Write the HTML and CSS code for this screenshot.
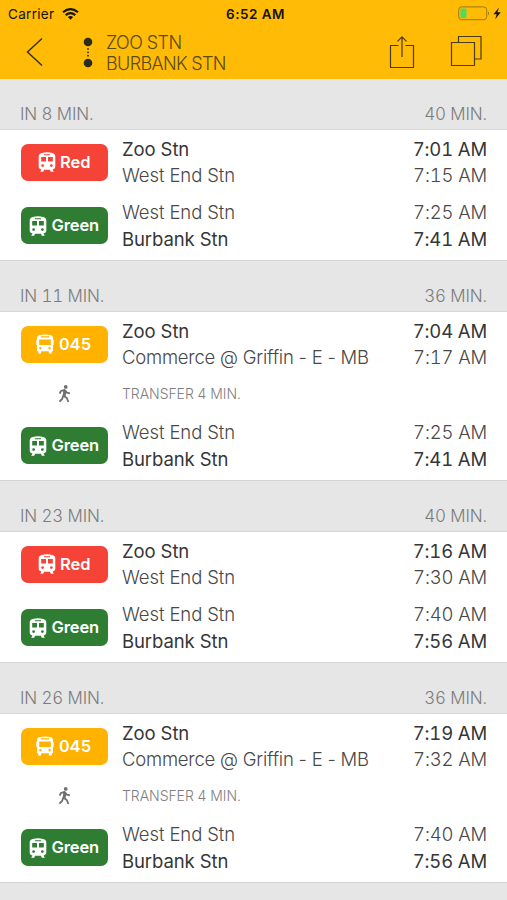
FILE: index.html
```html
<!DOCTYPE html>
<html lang="en">
<head>
<meta charset="utf-8">
<title>Trips</title>
<link rel="stylesheet" href="styles.css">
</head>
<body>
<svg class="defs" width="0" height="0">
  <symbol id="train" viewBox="0 0 18 20"><path fill="currentColor" fill-rule="evenodd" d="M3.800 1Q9-.6 14.200 1Q17.300 1.800 17.300 4.500V14.300Q17.300 17 14.600 17.400L15.800 19.800H12.800L11.900 17.800H6.100L5.200 19.800H2.200L3.400 17.400Q.7 17 .7 14.300V4.500Q.7 1.800 3.800 1ZM6 2.200V3.200H12V2.200ZM3.200 4.900V9.600H8V4.900ZM10 4.900V9.600H14.800V4.900ZM4.600 12.200A1.400 1.400 0 1 0 4.600 15A1.400 1.400 0 1 0 4.600 12.200ZM13.400 12.200A1.400 1.400 0 1 0 13.400 15A1.400 1.400 0 1 0 13.400 12.200Z"/></symbol>
  <symbol id="bus" viewBox="0 0 18 20"><path fill="currentColor" fill-rule="evenodd" d="M3.500 1Q9-.2 14.500 1Q17 1.600 17 4V5.500Q17.700 5.800 17.700 7V10Q17.700 11 17 11.200V17.200H15.800V18.500Q15.800 19.800 14.300 19.800Q12.800 19.800 12.800 18.500V17.200H5.200V18.500Q5.200 19.800 3.700 19.800Q2.200 19.800 2.200 18.500V17.200H1V11.200Q.3 11 .3 10V7Q.3 5.800 1 5.500V4Q1 1.600 3.500 1ZM4.800 2.200V3.500H13.200V2.200ZM3.200 5.400V11H14.800V5.400ZM4.400 13A1.200 1.200 0 1 0 4.400 15.400A1.200 1.200 0 1 0 4.400 13ZM13.600 13A1.200 1.200 0 1 0 13.600 15.400A1.200 1.200 0 1 0 13.600 13Z"/></symbol>
  <symbol id="walk" viewBox="0 0 12 18"><circle cx="7.200" cy="1.900" r="1.900" fill="currentColor"/><path d="M1.200 8.600L2.400 6L6 4.900L8.300 7.600L11.400 8.400M6.100 5.200L4.900 10.700L8.300 13L9.900 17M4.600 11L3.600 14L.9 16.700" fill="none" stroke="currentColor" stroke-width="1.800" stroke-linejoin="round"/><path d="M5.200 5L8 6.200L7 11.200L4.600 10.800Z" fill="currentColor"/></symbol>
</svg>
<header class="top">
  <div class="status">
    <span class="carrier">Carrier</span>
    <svg class="wifi" width="17" height="12" viewBox="0 0 17 12"><path d="M1 4.300Q8.500-2 16 4.300M3.700 7.100Q8.500 3.100 13.300 7.100" fill="none" stroke="#15130a" stroke-width="2.100"/><path d="M5.900 9.100Q8.500 7 11.100 9.100L8.500 11.700Z" fill="#15130a"/></svg>
    <span class="clock">6:52 AM</span>
    <svg class="battery" width="44" height="15" viewBox="0 0 44 15"><rect x=".7" y=".9" width="28" height="12.800" rx="3" fill="none" stroke="#9a7a12"/><rect x="2.500" y="2.600" width="6" height="9.400" rx="1" fill="#4cd964"/><path d="M30 5.200Q32 7.300 30 9.400Z" fill="#9a7a12"/><path d="M41 1.400L35.500 8.200H38.700L37.200 13.200L42.700 6.200H39.400Z" fill="#15130a"/></svg>
  </div>
  <div class="nav">
    <svg class="back" width="18" height="30" viewBox="0 0 18 30"><path d="M16 1.500L1.500 15L16 28.500" fill="none" stroke="#332d16" stroke-width="1.400"/></svg>
    <svg class="route" width="10" height="32" viewBox="0 0 10 32"><g fill="#292a20"><circle cx="5" cy="5" r="4.300"/><circle cx="5" cy="26" r="4.300"/><circle cx="5" cy="11.900" r=".9"/><circle cx="5" cy="15.300" r=".9"/><circle cx="5" cy="18.700" r=".9"/></g></svg>
    <div class="title"><div class="from">ZOO STN</div><div class="to">BURBANK STN</div></div>
    <svg class="share" width="26" height="34" viewBox="0 0 26 34"><path d="M9.500 10.500H1.500V32.500H24.500V10.500H16.500M13 22V2M8.500 6.300L13 1.800L17.500 6.300" fill="none" stroke="#493d10" stroke-width="1.200"/></svg>
    <svg class="copy" width="32" height="32" viewBox="0 0 32 32"><path d="M1.500 7.500H24.500V30.500H1.500ZM8.500 7.500V1.500H31V24H24.500" fill="none" stroke="#493d10" stroke-width="1.200"/></svg>
  </div>
</header>
<main id="trips"></main>
<script src="app.js"></script>
</body>
</html>
```

FILE: styles.css
```css
* { box-sizing: border-box; }
body { margin: 0; height: 900px; overflow: hidden; background: #e6e6e6; font-family: Inter, "Liberation Sans", sans-serif; color: #303030; }
svg { display: block; flex: none; }
.defs { position: absolute; }
.top { height: 79px; background: #ffbb05; }
.status { height: 28px; display: flex; align-items: center; padding: 0 5px 0 8px; color: #15130a; }
.status .battery { margin-top: -1px; }
.carrier { width: 54px; font-size: 13.500px; letter-spacing: .3px; }
.clock { flex: 1; margin-left: 147px; font-size: 13.500px; font-weight: 600; letter-spacing: .5px; }
.nav { height: 51px; display: flex; align-items: flex-start; padding: 0 25px 0 26px; }
.back { margin-top: 9px; }
.route { margin: 9px 0 0 39px; }
.title { flex: 1; margin: 4px 0 0 13px; font-size: 18px; font-weight: 300; line-height: 21px; color: #5b4a15; white-space: nowrap; }
.from { letter-spacing: -.55px; }
.to { letter-spacing: -.65px; }
.share { margin-top: 7px; }
.copy { margin: 7px 0 0 35px; }
.head { height: 51px; display: flex; justify-content: space-between; padding: 18px 20px 0 20px; font-size: 17px; line-height: 34px; font-weight: 300; letter-spacing: -.15px; font-feature-settings: "tnum"; color: #7c7c7c; border-bottom: 1px solid #d8d8d8; }
.legs { display: flex; flex-direction: column; gap: 10.500px; padding: 5.500px 20px 8px 20.500px; background: #fff; border-bottom: 1px solid #d4d4d4; }
.leg { display: grid; grid-template-columns: 87px 1fr auto; column-gap: 14.500px; align-items: center; height: 53px; font-size: 18.500px; line-height: 26.500px; letter-spacing: -.1px; white-space: nowrap; }
.badge { height: 37px; border-radius: 7px; display: flex; align-items: center; justify-content: center; gap: 4.500px; color: #fff; font-size: 16.500px; font-weight: 600; letter-spacing: -.1px; }
.red { background: #f54337; }
.green { background: #2e7d32; }
.yellow { background: #ffb300; font-feature-settings: "tnum"; letter-spacing: .2px; }
.times { text-align: right; font-feature-settings: "tnum"; letter-spacing: -.15px; }
.strong { font-weight: 400; color: #363636; }
.light { font-weight: 300; color: #484848; }
.long { letter-spacing: -.22px; }
.transfer { display: grid; grid-template-columns: 87px 1fr; column-gap: 14.500px; align-items: center; height: 27.500px; font-size: 14px; font-weight: 300; letter-spacing: -.05px; color: #808080; }
.transfer span { margin-top: -2px; }
.walk { justify-self: center; margin-top: -1px; color: #707070; }
```

FILE: app.js
```js
const green = (a, b) => ({ line: 'Green', color: 'green', icon: 'train', stops: [['West End Stn', a], ['Burbank Stn', b, true]] });
const red = (a, b) => ({ line: 'Red', color: 'red', icon: 'train', stops: [['Zoo Stn', a, true], ['West End Stn', b]] });
const bus = (a, b) => ({ line: '045', color: 'yellow', icon: 'bus', stops: [['Zoo Stn', a, true], ['Commerce @ Griffin - E - MB', b]] });

const trips = [
  ['IN 8 MIN.', '40 MIN.', [red('7:01 AM', '7:15 AM'), green('7:25 AM', '7:41 AM')]],
  ['IN 11 MIN.', '36 MIN.', [bus('7:04 AM', '7:17 AM'), 'TRANSFER 4 MIN.', green('7:25 AM', '7:41 AM')]],
  ['IN 23 MIN.', '40 MIN.', [red('7:16 AM', '7:30 AM'), green('7:40 AM', '7:56 AM')]],
  ['IN 26 MIN.', '36 MIN.', [bus('7:19 AM', '7:32 AM'), 'TRANSFER 4 MIN.', green('7:40 AM', '7:56 AM')]]
];

const cell = (stop, i) => `<div class="${stop[2] ? 'strong' : 'light'}${stop[i].length > 20 ? ' long' : ''}"><span>${stop[i]}</span></div>`;
const leg = l => typeof l === 'string'
  ? `<div class="transfer"><svg class="walk" width="13" height="18"><use href="#walk"/></svg><span>${l}</span></div>`
  : `<div class="leg"><div class="badge ${l.color}"><svg width="18" height="20"><use href="#${l.icon}"/></svg><span>${l.line}</span></div>
     <div class="stops">${l.stops.map(s => cell(s, 0)).join('')}</div>
     <div class="times">${l.stops.map(s => cell(s, 1)).join('')}</div></div>`;

document.getElementById('trips').innerHTML = trips.map(([start, total, legs]) =>
  `<section><div class="head"><span>${start}</span><span>${total}</span></div><div class="legs">${legs.map(leg).join('')}</div></section>`).join('');
```
